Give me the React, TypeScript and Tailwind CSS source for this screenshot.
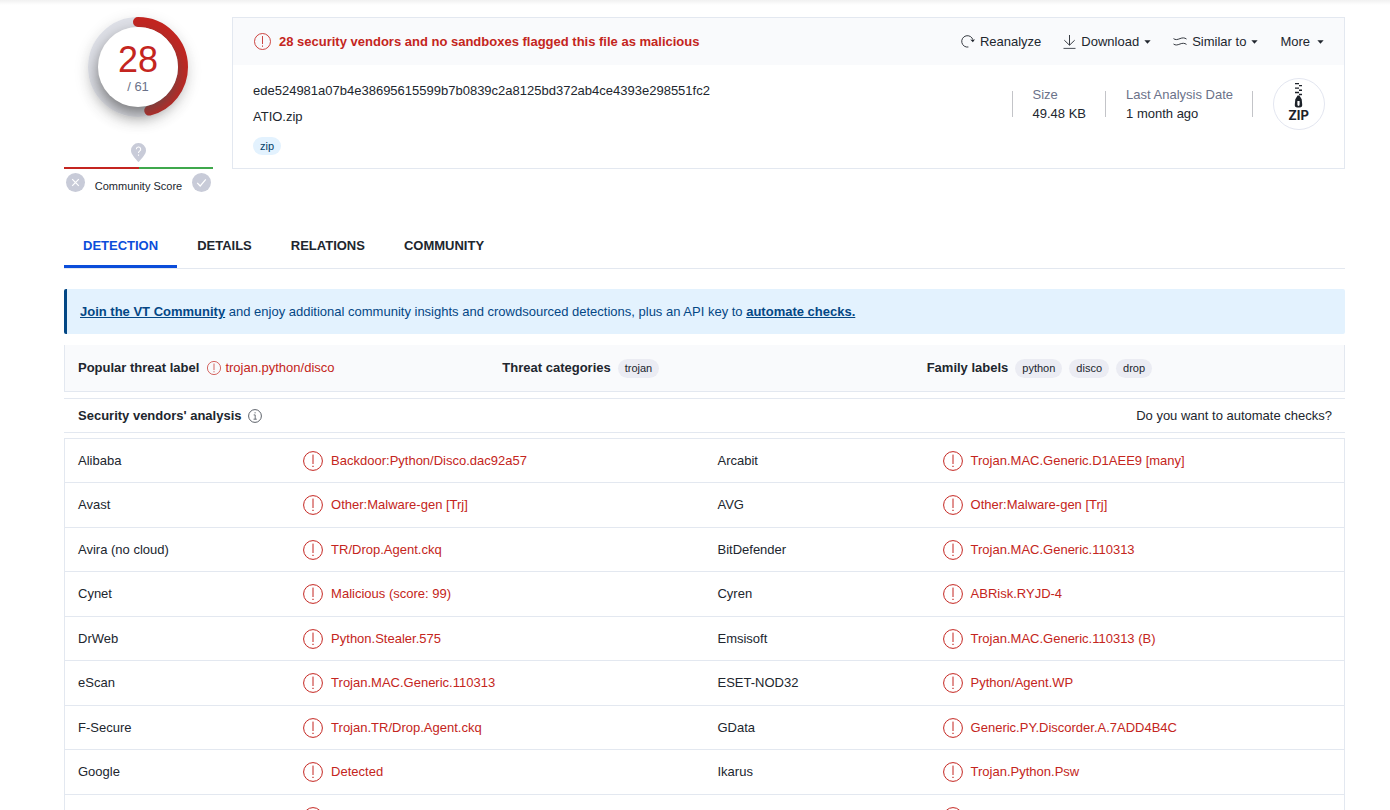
import type { ReactNode } from 'react'

type Detection = { vendor: string; result: string }

const ROWS: [Detection, Detection][] = [
  [{ vendor: 'Alibaba', result: 'Backdoor:Python/Disco.dac92a57' }, { vendor: 'Arcabit', result: 'Trojan.MAC.Generic.D1AEE9 [many]' }],
  [{ vendor: 'Avast', result: 'Other:Malware-gen [Trj]' }, { vendor: 'AVG', result: 'Other:Malware-gen [Trj]' }],
  [{ vendor: 'Avira (no cloud)', result: 'TR/Drop.Agent.ckq' }, { vendor: 'BitDefender', result: 'Trojan.MAC.Generic.110313' }],
  [{ vendor: 'Cynet', result: 'Malicious (score: 99)' }, { vendor: 'Cyren', result: 'ABRisk.RYJD-4' }],
  [{ vendor: 'DrWeb', result: 'Python.Stealer.575' }, { vendor: 'Emsisoft', result: 'Trojan.MAC.Generic.110313 (B)' }],
  [{ vendor: 'eScan', result: 'Trojan.MAC.Generic.110313' }, { vendor: 'ESET-NOD32', result: 'Python/Agent.WP' }],
  [{ vendor: 'F-Secure', result: 'Trojan.TR/Drop.Agent.ckq' }, { vendor: 'GData', result: 'Generic.PY.Discorder.A.7ADD4B4C' }],
  [{ vendor: 'Google', result: 'Detected' }, { vendor: 'Ikarus', result: 'Trojan.Python.Psw' }],
  [{ vendor: '', result: '' }, { vendor: '', result: '' }],
]

const TABS = ['DETECTION', 'DETAILS', 'RELATIONS', 'COMMUNITY']

function AlertIcon({ className }: { className: string }) {
  return (
    <svg viewBox="0 0 20 20" className={`shrink-0 ${className}`} fill="none" stroke="currentColor" aria-hidden="true">
      <circle cx="10" cy="10" r="9.4" strokeWidth="1" />
      <path d="M10 3.6v9.4" strokeWidth="1" />
      <path d="M10 14.7v1.4" strokeWidth="1.2" />
    </svg>
  )
}

function Caret() {
  return (
    <svg viewBox="0 0 7 4" className="h-1 w-[7px] shrink-0" fill="currentColor" aria-hidden="true">
      <path d="M0.4 0.2h6.2L3.5 3.7z" />
    </svg>
  )
}

function Action({ icon, label, caret }: { icon?: ReactNode; label: string; caret?: boolean }) {
  return (
    <button type="button" className={`flex items-center whitespace-nowrap ${icon ? 'gap-[5px]' : 'gap-[7px]'}`}>
      {icon}
      <span>{label}</span>
      {caret && <Caret />}
    </button>
  )
}

function Chip({ children }: { children: ReactNode }) {
  return <span className="rounded-full bg-[#ebecf3] px-[7px] text-[11px] leading-[19px]">{children}</span>
}

function ScoreGauge({ score, total }: { score: number; total: number }) {
  const circumference = 2 * Math.PI * 45
  return (
    <div className="ml-6 grid size-[100px] place-items-center self-start rounded-full shadow-[0_4px_16px_rgba(0,0,0,0.12)]">
      <svg viewBox="0 0 100 100" className="col-start-1 row-start-1 size-[100px]" fill="none" aria-hidden="true">
        <circle cx="50" cy="50" r="45" stroke="#dfe1e8" strokeWidth="10" />
        <circle
          cx="50"
          cy="50"
          r="45"
          stroke="#c42520"
          strokeWidth="10"
          strokeLinecap="round"
          strokeDasharray={`${(circumference * score) / total} ${circumference}`}
          transform="rotate(-90 50 50)"
        />
      </svg>
      <div className="col-start-1 row-start-1 flex size-20 flex-col items-center rounded-full bg-white pt-[14px] shadow-[0_7px_16px_rgba(80,80,80,0.75)]">
        <span className="text-[36px] leading-[38px] text-[#c42520]">{score}</span>
        <span className="text-[13px] leading-4 text-[#6b7289]">/ {total}</span>
      </div>
    </div>
  )
}

function CommunityScore() {
  return (
    <div className="mt-[26px] flex w-full flex-col">
      <svg viewBox="0 0 15 19" className="h-[19px] w-[15px] self-center" aria-hidden="true">
        <path d="M7.5 0A7.4 7.4 0 0 1 15 7.4C15 11.4 10.6 15 8.2 18.6Q7.5 19.4 6.8 18.6C4.4 15 0 11.4 0 7.4A7.4 7.4 0 0 1 7.5 0z" fill="#c8cbd8" />
        <path d="M5.3 6.2a2.2 2.2 0 1 1 3.3 1.9c-.8.5-1.1.9-1.1 1.9M7.5 11.4v1.4" fill="none" stroke="#fff" strokeWidth="1.1" />
      </svg>
      <div className="mt-[5px] flex h-0.5">
        <div className="flex-1 bg-[#c42520]" />
        <div className="flex-1 bg-[#3fa84c]" />
      </div>
      <div className="mt-1 flex items-start justify-between px-0.5">
        <svg viewBox="0 0 19 19" className="size-[19px]" fill="none" stroke="#fff" strokeWidth="1.2" aria-hidden="true">
          <circle cx="9.5" cy="9.5" r="9.5" fill="#c8cbd8" stroke="none" />
          <path d="M6.2 6.2l6.6 6.6M12.8 6.2l-6.6 6.6" />
        </svg>
        <span className="mt-[5px] text-[11px] leading-4">Community Score</span>
        <svg viewBox="0 0 19 19" className="size-[19px]" fill="none" stroke="#fff" strokeWidth="1.2" aria-hidden="true">
          <circle cx="9.5" cy="9.5" r="9.5" fill="#c8cbd8" stroke="none" />
          <path d="M5.2 9.8l3 3.2 5.6-6.6" />
        </svg>
      </div>
    </div>
  )
}

function ZipIcon() {
  return (
    <svg viewBox="0 0 52 52" className="size-[52px] shrink-0" role="img" aria-label="ZIP file">
      <circle cx="26" cy="26" r="25.5" fill="#fff" stroke="#e3e6f0" />
      <g fill="#1d2229">
        <path d="M22 5h4v1.3h-4zM26 7h3v1.3h-3zM22 9.4h4v1.4h-4zM26 11.6h3v1.4h-3zM22 13.8h4v1.4h-4zM26 15.8h3v1.4h-3z" />
        <path fillRule="evenodd" d="M24.6 17.6h1.8l2.3 3.6 0.5 5.4a2.7 2.7 0 0 1-2.7 3h-2a2.7 2.7 0 0 1-2.7-3l0.5-5.4zM24.4 23v3.6q0 1.4 1.1 1.4t1.1-1.4V23z" />
      </g>
      <text x="25.5" y="42" textAnchor="middle" fill="#1d2229" fontFamily="Inter, sans-serif" fontSize="13" fontWeight="700">
        ZIP
      </text>
    </svg>
  )
}

function FileCard() {
  return (
    <section className="min-w-0 flex-1 border border-[#e3e8f0]">
      <div className="flex h-[47px] items-center justify-between bg-[#f9fafc] px-5">
        <div className="flex items-center gap-2 font-bold text-[#c42520]">
          <AlertIcon className="ml-px size-[17px]" />
          <span>28 security vendors and no sandboxes flagged this file as malicious</span>
        </div>
        <div className="flex items-center gap-[22px]">
          <Action
            label="Reanalyze"
            icon={
              <svg viewBox="0 0 14 13" className="h-[13px] w-3.5" fill="none" stroke="currentColor" aria-hidden="true">
                <path d="M7.4 12A5.7 5.7 0 1 1 11.9 4.8" strokeWidth="0.9" />
                <path d="M9.2 4.4l2.7 2.8L14 4.2l-2.2 0.9z" fill="currentColor" stroke="none" />
              </svg>
            }
          />
          <Action
            label="Download"
            caret
            icon={
              <svg viewBox="0 0 13 14" className="h-3.5 w-[13px]" fill="none" stroke="currentColor" aria-hidden="true">
                <path d="M6.5 0v10M1.3 5.2l5.2 5 5.2-5" strokeWidth="0.9" />
                <path d="M0.5 13.4h12" strokeWidth="0.8" />
              </svg>
            }
          />
          <Action
            label="Similar to"
            caret
            icon={
              <svg viewBox="0 0 14 9" className="h-[9px] w-3.5" fill="none" stroke="currentColor" aria-hidden="true">
                <path d="M0.5 1.6c2 1.6 4 1 6.5 0s4.5-1 6.500 0.4M0.5 7c2 1.6 4 1 6.5 0s4.5-1 6.5 0.4" strokeWidth="0.9" />
              </svg>
            }
          />
          <Action label="More" caret />
        </div>
      </div>
      <div className="flex items-start justify-between pt-[13px] pr-[19px] pb-[13px] pl-5">
        <div className="mt-[3px] min-w-0">
          <div className="leading-5 break-all">ede524981a07b4e38695615599b7b0839c2a8125bd372ab4ce4393e298551fc2</div>
          <div className="mt-1.5 leading-5">ATIO.zip</div>
          <div className="mt-2.5 flex">
            <a href="#zip" className="rounded-full bg-[#e3f2fe] px-[7px] text-[11px] leading-[18px] text-[#034069]">
              zip
            </a>
          </div>
        </div>
        <div className="flex items-center">
          <dl className="flex leading-[19px] whitespace-nowrap">
            <div className="flex items-center gap-5 pr-[19px]">
              <div className="h-[26px] w-px bg-[#c3c4c8]" />
              <div>
                <dt className="text-[#6b7289]">Size</dt>
                <dd>49.48 KB</dd>
              </div>
            </div>
            <div className="flex items-center gap-5 pr-[19px]">
              <div className="h-[26px] w-px bg-[#c3c4c8]" />
              <div>
                <dt className="text-[#6b7289]">Last Analysis Date</dt>
                <dd>1 month ago</dd>
              </div>
            </div>
          </dl>
          <div className="mr-5 h-[26px] w-px bg-[#c3c4c8]" />
          <ZipIcon />
        </div>
      </div>
    </section>
  )
}

function DetectionCells({ vendor, result }: Detection) {
  return (
    <>
      <td className="border-b border-[#e3e8f0] pl-[13px]">{vendor}</td>
      <td className="border-b border-[#e3e8f0] pl-[13px]">
        <div className="flex items-center gap-2 text-[#c42520]">
          <AlertIcon className="size-5" />
          <span>{result}</span>
        </div>
      </td>
    </>
  )
}

export default function App() {
  return (
    <div className="h-screen overflow-hidden bg-white font-['Liberation_Sans',Arial,sans-serif] text-[13px] text-[#21262e]">
      <div className="h-[5px] bg-linear-to-b from-[#f1f1f1] to-white" />
      <main className="pt-3 pr-[45px] pl-16">
        <header className="flex items-start gap-[19px]">
          <div className="flex w-[149px] shrink-0 flex-col items-center">
            <ScoreGauge score={28} total={61} />
            <CommunityScore />
          </div>
          <FileCard />
        </header>

        <nav className="mt-[30px] flex gap-px border-b border-[#e3e8f0]">
          {TABS.map((tab, i) => (
            <a
              key={tab}
              href={`#${tab.toLowerCase()}`}
              className={`border-b-3 px-[19px] pt-3 pb-[9px] leading-5 font-bold ${i === 0 ? 'border-[#0b4dda] text-[#0b4dda]' : 'border-transparent'}`}
            >
              {tab}
            </a>
          ))}
        </nav>

        <p className="mt-5 rounded-xs border-l-3 border-[#034785] bg-[#e3f2fe] px-[13px] py-3 leading-[21px] text-[#034785]">
          <a href="#join" className="font-bold underline">Join the VT Community</a> and enjoy additional community insights and crowdsourced
          detections, plus an API key to <a href="#automate" className="font-bold underline">automate checks.</a>
        </p>

        <section className="mt-[11px] grid h-[47px] grid-cols-3 items-center gap-5 border-x border-b border-[#e3e8f0] bg-[#f9fafc] px-[13px]">
          <div className="flex items-center gap-2">
            <h2 className="font-bold">Popular threat label</h2>
            <div className="flex items-center gap-1 text-[#c42520]">
              <AlertIcon className="size-3.5" />
              <span>trojan.python/disco</span>
            </div>
          </div>
          <div className="flex items-center gap-[7px]">
            <h2 className="font-bold">Threat categories</h2>
            <Chip>trojan</Chip>
          </div>
          <div className="flex items-center gap-[7px]">
            <h2 className="font-bold">Family labels</h2>
            <Chip>python</Chip>
            <Chip>disco</Chip>
            <Chip>drop</Chip>
          </div>
        </section>

        <div className="mt-1.5 flex h-[35px] items-center justify-between border-y border-[#e3e8f0] pr-[13px] pl-3.5">
          <div className="flex items-center gap-1.5">
            <h2 className="font-bold">Security vendors' analysis</h2>
            <svg viewBox="0 0 14 14" className="size-3.5" fill="none" stroke="#4b5059" aria-hidden="true">
              <circle cx="7" cy="7" r="6.4" strokeWidth="0.9" />
              <path d="M5.7 5.9h1.5v4.3M5.5 10.2h3.3M6.5 3.8h1.2" strokeWidth="0.8" />
            </svg>
          </div>
          <a href="#automate">Do you want to automate checks?</a>
        </div>

        <div className="mt-[5px] border border-[#e3e8f0]">
          <table className="w-full table-fixed border-separate border-spacing-0">
            <colgroup>
              <col className="w-[17.6%]" />
              <col className="w-[32.4%]" />
              <col className="w-[17.6%]" />
              <col className="w-[32.4%]" />
            </colgroup>
            <tbody>
              {ROWS.map(([left, right], i) => (
                <tr key={i} className="odd:h-11 even:h-[45px]">
                  <DetectionCells {...left} />
                  <DetectionCells {...right} />
                </tr>
              ))}
            </tbody>
          </table>
        </div>
      </main>
    </div>
  )
}
